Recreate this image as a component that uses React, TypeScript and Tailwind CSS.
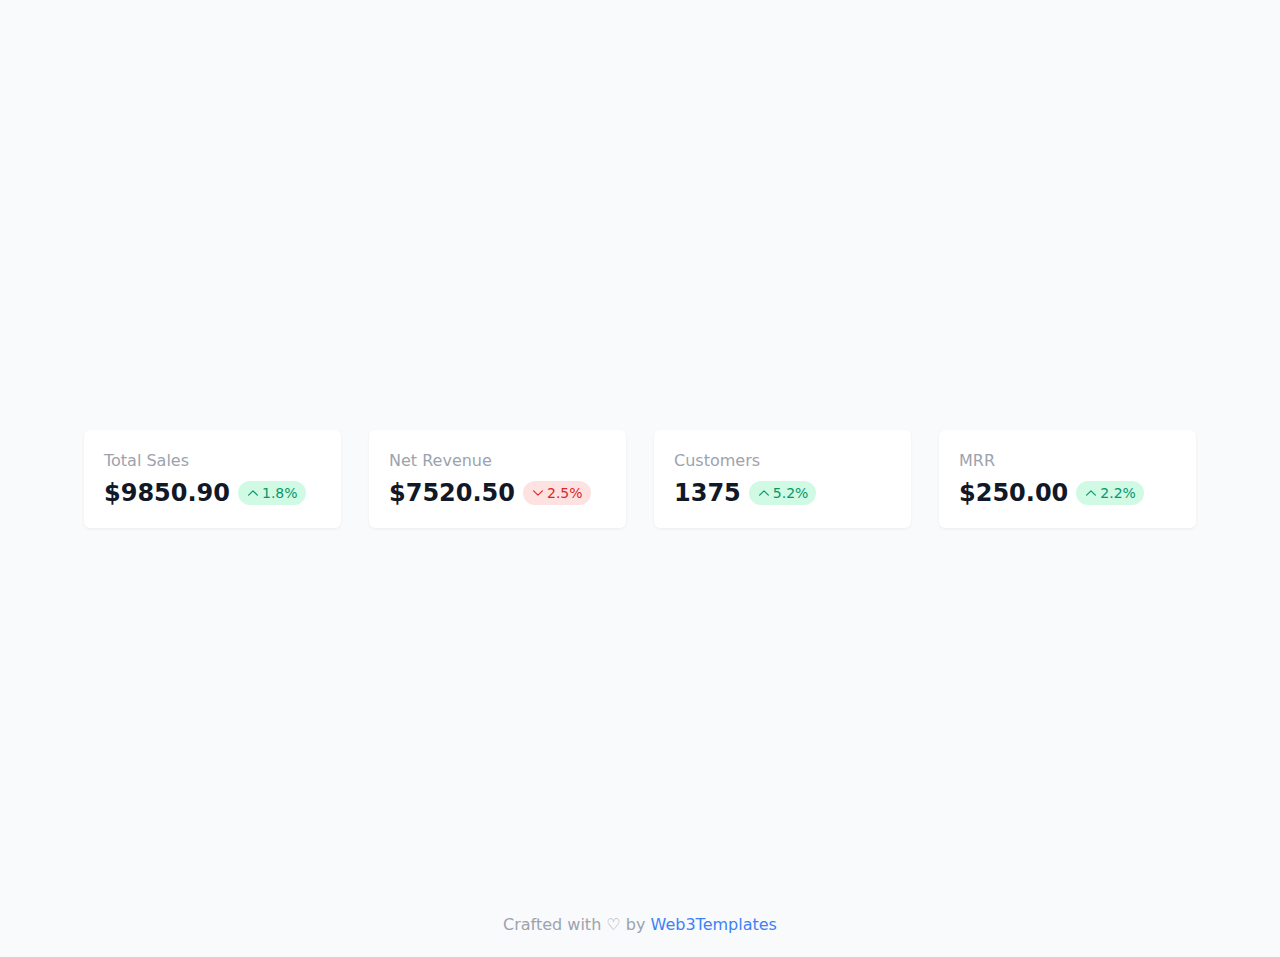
type Stat = {
	label: string;
	value: string;
	change: string;
	up: boolean;
};

const stats: Stat[] = [
	{ label: "Total Sales", value: "$9850.90", change: "1.8%", up: true },
	{ label: "Net Revenue", value: "$7520.50", change: "2.5%", up: false },
	{ label: "Customers", value: "1375", change: "5.2%", up: true },
	{ label: "MRR", value: "$250.00", change: "2.2%", up: true },
];

function Chevron({ up }: { up: boolean }) {
	return (
		<svg
			viewBox="0 0 24 24"
			fill="none"
			stroke="currentColor"
			strokeWidth={2}
			strokeLinecap="round"
			strokeLinejoin="round"
			className="h-3.5 w-3.5"
		>
			<path d={up ? "M4.5 15.75l7.5-7.5 7.5 7.5" : "M19.5 8.25l-7.5 7.5-7.5-7.5"} />
		</svg>
	);
}

function StatCard({ stat }: { stat: Stat }) {
	return (
		<div className="rounded-md bg-white px-5 pt-[19px] pb-[19px] shadow-[0_1px_3px_rgba(0,0,0,0.06)]">
			<p className="text-base leading-6 text-[#9ca3af]">{stat.label}</p>
			<div className="mt-1 flex items-center gap-2">
				<span className="text-2xl font-bold leading-8 text-[#111827]">
					{stat.value}
				</span>
				<span
					className={
						stat.up
							? "flex items-center gap-0.5 rounded-full bg-[#d1fae5] px-2 py-0.5 text-sm leading-5 text-[#059669]"
							: "flex items-center gap-0.5 rounded-full bg-[#fee2e2] px-2 py-0.5 text-sm leading-5 text-[#dc2626]"
					}
				>
					<Chevron up={stat.up} />
					{stat.change}
				</span>
			</div>
		</div>
	);
}

export default function App() {
	return (
		<div className="flex min-h-screen flex-col bg-[#f9fafb] font-['DejaVu_Sans',sans-serif]">
			<main className="flex flex-1 items-center px-[84px] pt-[53px]">
				<div className="grid w-full grid-cols-4 gap-7">
					{stats.map((stat) => (
						<StatCard key={stat.label} stat={stat} />
					))}
				</div>
			</main>
			<footer className="flex h-[52px] items-center justify-center pb-[13px] text-base text-[#9ca3af]">
				<p>
					Crafted with ♡ by{" "}
					<a href="#" className="text-[#3b82f6]">
						Web3Templates
					</a>
				</p>
			</footer>
		</div>
	);
}
